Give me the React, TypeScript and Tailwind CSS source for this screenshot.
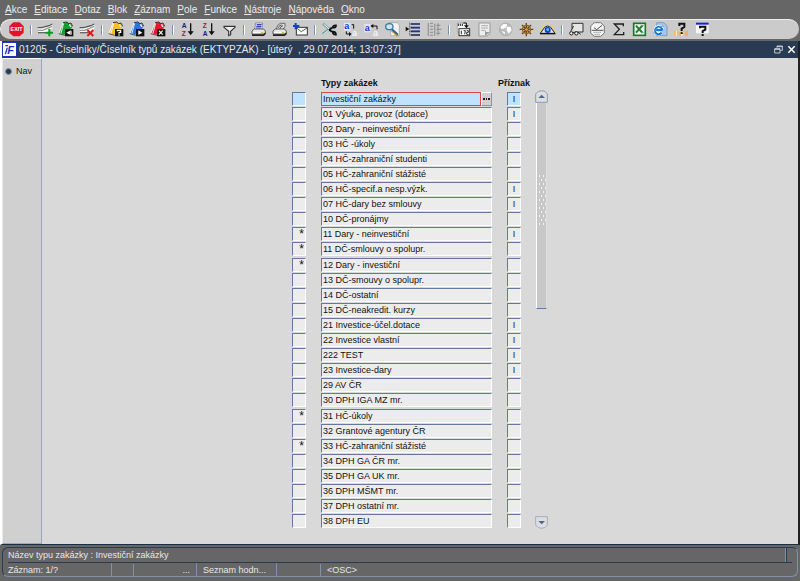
import type { ReactNode } from "react";

const MENU = ["Akce", "Editace", "Dotaz", "Blok", "Záznam", "Pole", "Funkce", "Nástroje", "Nápověda", "Okno"];

type Row = { name: string; flag?: string; mark?: string };

const ROWS: Row[] = [
  { name: "Investiční zakázky", flag: "I" },
  { name: "01 Výuka, provoz (dotace)", flag: "I" },
  { name: "02 Dary - neinvestiční" },
  { name: "03 HČ -úkoly" },
  { name: "04 HČ-zahraniční studenti" },
  { name: "05 HČ-zahraniční stážisté" },
  { name: "06 HČ-specif.a nesp.výzk.", flag: "I" },
  { name: "07 HČ-dary bez smlouvy", flag: "I" },
  { name: "10 DČ-pronájmy" },
  { name: "11 Dary - neinvestiční", flag: "I", mark: "*" },
  { name: "11 DČ-smlouvy o spolupr.", mark: "*" },
  { name: "12 Dary - investiční", mark: "*" },
  { name: "13 DČ-smouvy o spolupr." },
  { name: "14 DČ-ostatní" },
  { name: "15 DČ-neakredit. kurzy" },
  { name: "21 Investice-účel.dotace", flag: "I" },
  { name: "22 Investice vlastní", flag: "I" },
  { name: "222 TEST", flag: "I" },
  { name: "23 Investice-dary", flag: "I" },
  { name: "29 AV ČR" },
  { name: "30 DPH IGA MZ mr." },
  { name: "31 HČ-úkoly", mark: "*" },
  { name: "32 Grantové agentury ČR" },
  { name: "33 HČ-zahraniční stážisté", mark: "*" },
  { name: "34 DPH GA ČR mr." },
  { name: "35 DPH GA UK mr." },
  { name: "36 DPH MŠMT mr." },
  { name: "37 DPH ostatní mr." },
  { name: "38 DPH EU" },
];

function Record() {
  return (
    <>
      <path d="M3 20 36 14 46 9 46 22 34 35 3 35Z" fill="#fafafa" />
      <path d="M2 20h12l22-6 10-5" stroke="#555" strokeWidth="3.5" fill="none" />
      <path d="M3 28h14l14-6 14-6" stroke="#999" strokeWidth="4" fill="none" />
      <path d="M3 35h26" stroke="#666" strokeWidth="4" />
    </>
  );
}

// folder with a small black badge, shared by the query / block buttons
function Folder({ color, children }: { color: string; children: ReactNode }) {
  return (
    <>
      <path d="M3 37 15 6 28 3 43 14 36 34 20 41Z" fill={color} />
      <path d="M3 37 15 6M17 7 8 40" stroke="#fff" strokeWidth="2.5" />
      <path d="M15 5 26 3 32 8 39 6 44 16" stroke="#333" strokeWidth="3" fill="none" />
      <path d="M34 10 39 18" stroke="#eee" strokeWidth="4" />
      <path d="M2 38 20 43" stroke="#555" strokeWidth="3" />
      <rect x="21" y="24" width="25" height="22" fill="#111" />
      {children}
    </>
  );
}

function Printer() {
  return (
    <>
      <path d="M6 30 13 24h28l5 6v9H6Z" fill="#e6e6e6" stroke="#444" strokeWidth="2.5" />
      <path d="M6 40h34l6-6v7l-5 4H6Z" fill="#222" />
      <path d="M9 35h24" stroke="#fff" strokeWidth="3" />
      <path d="M33 35h6" stroke="#d9c21a" strokeWidth="4" />
    </>
  );
}

function GlyphA({ x, y, fill }: { x: number; y: number; fill: string }) {
  return (
    <text x={x} y={y} fontSize="27" fontWeight="bold" fill={fill} fontFamily="Liberation Sans, sans-serif">
      a
    </text>
  );
}

function SortIcon({ top, bottom }: { top: "A" | "Z"; bottom: "A" | "Z" }) {
  return (
    <g fontSize="20" fontWeight="bold" fontFamily="Liberation Sans, sans-serif">
      <text x="8" y="20" fill={top === "A" ? "#1c1c78" : "#a01830"}>
        {top}
      </text>
      <text x="8" y="44" fill={bottom === "A" ? "#1c1c78" : "#a01830"}>
        {bottom}
      </text>
      <path d="M35 7v28" stroke="#111" strokeWidth="4" />
      <path d="M26 31h18l-9 12Z" fill="#111" />
    </g>
  );
}

type Tool = { label: string; art: ReactNode };

const TOOLS: Tool[][] = [
  [
    {
      label: "Konec",
      art: (
        <>
          <path d="M16 4h19l12 12v19L35 46H16L4 35V16Z" fill="#df1525" />
          <text x="25.5" y="31" fontSize="16" fontWeight="bold" textAnchor="middle" fill="#fff" fontFamily="Liberation Sans, sans-serif">
            EXIT
          </text>
        </>
      ),
    },
  ],
  [
    {
      label: "Vložit záznam",
      art: (
        <>
          <Record />
          <path d="M37 24v22M26 35h22" stroke="#0b9a1c" strokeWidth="6" />
        </>
      ),
    },
    {
      label: "Uložit",
      art: (
        <Folder color="#12a02c">
          <path d="M38 28v14L25 35Z" fill="#fff" />
          <path d="M39 29h3v12h-3Z" fill="#999" />
        </Folder>
      ),
    },
    {
      label: "Smazat záznam",
      art: (
        <>
          <Record />
          <path d="M25 27 43 45M43 27 25 45" stroke="#e01818" strokeWidth="6" />
        </>
      ),
    },
  ],
  [
    {
      label: "Zadat dotaz",
      art: (
        <Folder color="#f5bd2c">
          <path d="M28 31v-3h10v6h-5v4M33 40v4" stroke="#fff" strokeWidth="3.5" fill="none" />
        </Folder>
      ),
    },
    {
      label: "Provést dotaz",
      art: (
        <Folder color="#2a75dc">
          <path d="M28 28v14l12-7Z" fill="#fff" />
        </Folder>
      ),
    },
    {
      label: "Zrušit dotaz",
      art: (
        <Folder color="#d42030">
          <path d="M27 29 38 41M38 29 27 41" stroke="#eee" strokeWidth="4" />
        </Folder>
      ),
    },
  ],
  [
    { label: "Řadit vzestupně", art: <SortIcon top="A" bottom="Z" /> },
    { label: "Řadit sestupně", art: <SortIcon top="Z" bottom="A" /> },
    {
      label: "Filtr",
      art: <path d="M9 16h33v3L29 31v10l-6 3V31L9 19Z" fill="#eee" stroke="#333" strokeWidth="3.5" />,
    },
  ],
  [
    {
      label: "Tisk",
      art: (
        <>
          <path d="M14 27 17 6h21l-3 21Z" fill="#f5f7ff" stroke="#666" strokeWidth="2" />
          <path d="M20 11h15M19 16h15M18 21h15" stroke="#3442b5" strokeWidth="3.5" />
          <Printer />
        </>
      ),
    },
    {
      label: "Náhled tisku",
      art: (
        <>
          <path d="M15 27 20 13 28 7h14v10l-9 12Z" fill="#ddd" stroke="#555" strokeWidth="2.5" />
          <path d="M22 20q4-9 10-8M27 23q2-8 9-9" stroke="#333" strokeWidth="2.5" fill="none" />
          <Printer />
        </>
      ),
    },
    {
      label: "Poslat poštou",
      art: (
        <>
          <rect x="13" y="19" width="33" height="23" fill="#fff" stroke="#333" strokeWidth="3" />
          <path d="M14 21 28 32 45 21" stroke="#333" strokeWidth="2.5" fill="none" />
          <path d="M11 6v19M3 15h19" stroke="#0c40d8" strokeWidth="6" />
        </>
      ),
    },
  ],
  [
    {
      label: "Vyjmout",
      art: (
        <>
          <path d="M6 8 32 32M5 39 31 20" stroke="#6f9f9f" strokeWidth="7" />
          <path d="M8 9 34 33M7 40 34 19" stroke="#e7f7f5" strokeWidth="3" />
          <path d="M24 27 34 20q12 2 11-7-8-1-11 8M24 27 34 32q11-1 11 9-9 1-11-9" fill="none" stroke="#111" strokeWidth="5" />
        </>
      ),
    },
    {
      label: "Kopírovat",
      art: (
        <>
          <rect x="6" y="6" width="19" height="23" fill="#e3e8ff" />
          <GlyphA x={7} y={25} fill="#2135d5" />
          <path d="M29 11h6v12M13 31v8h11" stroke="#111" strokeWidth="3" fill="none" />
          <path d="M21 33v13l8-7Z" fill="#111" />
          <GlyphA x={30} y={45} fill="#f5f5f5" />
        </>
      ),
    },
    {
      label: "Vložit",
      art: (
        <>
          <rect x="4" y="9" width="19" height="25" fill="#e3e8ff" />
          <GlyphA x={5} y={30} fill="#2135d5" />
          <path d="M26 15h16v10" stroke="#111" strokeWidth="3" fill="none" />
          <path d="M22 15l9-6v12Z" fill="#111" />
          <GlyphA x={30} y={45} fill="#f5f5f5" />
        </>
      ),
    },
    {
      label: "Hledat",
      art: (
        <>
          <path d="M14 5h26l6 7v32H20V5" fill="#f4f4f4" stroke="#999" strokeWidth="2" />
          <path d="M23 27 42 44" stroke="#c79a22" strokeWidth="8" />
          <path d="M22 23 41 40" stroke="#1f5cae" strokeWidth="5" />
          <ellipse cx="16" cy="17" rx="11" ry="9" fill="#c6e7f5" stroke="#3b7a98" strokeWidth="4" />
        </>
      ),
    },
    {
      label: "Seznam",
      art: (
        <>
          <path d="M17 9h28M17 20h28M17 31h28M17 42h28" stroke="#16205e" strokeWidth="5" />
          <path d="M21 20h24M21 31h24" stroke="#2648c8" strokeWidth="2" />
          <path d="M14 5v40" stroke="#111" strokeWidth="2" strokeDasharray="3 2" />
          <path d="M2 17v14l11-7Z" fill="#111" />
        </>
      ),
    },
    {
      label: "Strom",
      art: (
        <>
          <path d="M7 6v39M12 7h9M12 16h9M12 25h9M12 34h9M12 43h9M26 8v36M31 13h12M31 25h16M31 37h12" stroke="#999" strokeWidth="4" />
          <path d="M36 7v36" stroke="#8b8b8b" strokeWidth="3" />
        </>
      ),
    },
  ],
  [
    {
      label: "Kalendář",
      art: (
        <>
          <path d="M7 6h27v27H7Z" fill="#f5f5f5" stroke="#999" strokeWidth="2" />
          <path d="M10 8v7M16 8v7M22 8v7" stroke="#222" strokeWidth="3" />
          <path d="M25 6h9v9" stroke="#111" strokeWidth="3" fill="none" />
          <path d="M27 13h14l-7 9Z" fill="#111" />
          <rect x="12" y="23" width="32" height="21" fill="#fff" stroke="#333" strokeWidth="3" />
          <path d="M19 29v11M26 29h5l-2 11M35 29h5v5h-5v6h6" stroke="#333" strokeWidth="3" fill="none" />
        </>
      ),
    },
    {
      label: "Editor",
      art: (
        <>
          <path d="M9 6h33v31l-9 8H9Z" fill="#eee" stroke="#999" strokeWidth="3" />
          <path d="M16 14h20M16 21h20M16 28h11" stroke="#aaa" strokeWidth="3" />
          <path d="M42 33H31l-4-5v17Z" fill="#999" />
        </>
      ),
    },
    {
      label: "Web",
      art: (
        <>
          <circle cx="26" cy="25" r="19" fill="#bcbcbc" stroke="#a5a5a5" strokeWidth="2" />
          <path d="M10 18 19 9l11 1-2 9-9 4-6 1ZM30 17l11 1 3 10-9 10-6-10ZM15 29l9 5-2 7Z" fill="#fff" />
        </>
      ),
    },
    {
      label: "Navigátor",
      art: (
        <>
          <path d="M25 6v40M5 25h41M12 12 39 39M39 12 12 39" stroke="#6d410d" strokeWidth="4" />
          <circle cx="25.5" cy="25.5" r="12" fill="none" stroke="#95601d" strokeWidth="4" />
          <circle cx="25.5" cy="25.5" r="4" fill="#d8a450" />
        </>
      ),
    },
    {
      label: "Zobrazit",
      art: (
        <>
          <path d="M26 3v8M8 12l6 5M44 12l-6 5M2 27l7-2M49 27l-7-2" stroke="#f0dc30" strokeWidth="4" />
          <path d="M4 37 17 19q9-8 18 0l13 18Z" fill="#d7e4ed" stroke="#222" strokeWidth="3" />
          <circle cx="26" cy="27" r="9" fill="#1738ca" />
          <circle cx="26" cy="26" r="4" fill="#49d5ee" />
          <path d="M3 38h46" stroke="#111" strokeWidth="4" />
        </>
      ),
    },
  ],
  [
    {
      label: "Převod",
      art: (
        <>
          <path d="M12 7h33v26H19" fill="#e5e5e5" stroke="#333" strokeWidth="3" />
          <path d="M12 7v16M8 31l9-16M30 33l8 7" stroke="#333" strokeWidth="3" />
          <circle cx="10" cy="37" r="5" fill="#eee" stroke="#222" strokeWidth="3" />
          <circle cx="25" cy="37" r="5" fill="#eee" stroke="#222" strokeWidth="3" />
          <path d="M14 35h6" stroke="#222" strokeWidth="3" />
        </>
      ),
    },
    {
      label: "Čas",
      art: (
        <>
          <path d="M16 5h19l11 10v21L35 46H16L5 36V15Z" fill="#f4f4f4" stroke="#777" strokeWidth="3" />
          <path d="M15 20l8 6 16-13M8 28h35" stroke="#555" strokeWidth="3" fill="none" />
          <path d="M14 34h24M17 40h18" stroke="#777" strokeWidth="3" strokeDasharray="3 3" />
        </>
      ),
    },
    {
      label: "Součet",
      art: <path d="M40 16V9H13l15 16-15 16h28v-8" fill="none" stroke="#222" strokeWidth="4" />,
    },
    {
      label: "Excel",
      art: (
        <>
          <rect x="8" y="7" width="35" height="36" fill="#edf5ed" stroke="#18782b" strokeWidth="5" />
          <path d="M15 14 34 35M34 14 15 35" stroke="#227b34" strokeWidth="6" />
          <path d="M29 14h9M31 35h7" stroke="#6c9b71" strokeWidth="3" />
        </>
      ),
    },
    {
      label: "Internet",
      art: (
        <>
          <path d="M14 5h21l10 9v30H14Z" fill="#a7c6ea" stroke="#6387b3" strokeWidth="2" />
          <path d="M30 26a10 10 0 1 0-2 8" fill="none" stroke="#fff" strokeWidth="11" />
          <path d="M31 28a11 11 0 1 0-2 7M11 27h20" fill="none" stroke="#1978ca" strokeWidth="6" />
          <path d="M5 37q7-20 29-22" stroke="#58aaea" strokeWidth="3" fill="none" />
        </>
      ),
    },
    {
      label: "O aplikaci",
      art: (
        <>
          <path d="M4 29h10v16H4ZM17 33h12v12H17ZM35 29h10v16H35Z" fill="#efb553" />
          <path d="M8 29h4v16H8ZM24 36h5v9h-5Z" fill="#fff0b6" />
          <path d="M19 15V8h15v10l-8 5v7M26 34v5" stroke="#111" strokeWidth="6" fill="none" />
        </>
      ),
    },
    {
      label: "Nápověda",
      art: (
        <>
          <rect x="6" y="7" width="38" height="30" fill="#f5f5f5" />
          <path d="M6 8h38" stroke="#1420d8" strokeWidth="6" />
          <path d="M18 22v-5h16v9l-8 4v6M26 39v6" stroke="#111" strokeWidth="6" fill="none" />
        </>
      ),
    },
  ],
];

const FIELD = "block h-3.5 w-full border border-t-[#66799c] border-l-[#66799c] border-r-white border-b-white outline-none";

function MenuBar() {
  return (
    <nav className="flex h-[19px] items-center gap-[7px] px-[5px] text-[10px] text-[#ececec]">
      {MENU.map((item) => (
        <button key={item} type="button" className="leading-4">
          <span className="underline">{item[0]}</span>
          {item.slice(1)}
        </button>
      ))}
    </nav>
  );
}

function Toolbar() {
  return (
    <div className="mr-px flex h-5 items-center rounded-full border-t border-l border-[#eee] bg-[#cbcbcb] pl-[7px]">
      {TOOLS.map((group, i) => (
        <div key={i} className="flex items-center">
          {i > 0 && <span className="mx-[5px] h-2.5 w-0.5 border-r border-white bg-[#7d90b0]" />}
          <div className="flex gap-1">
            {group.map(({ label, art }) => (
              <button key={label} type="button" aria-label={label} className="size-[17px]">
                <svg viewBox="0 0 51 51" className="size-[17px]" fill="none">
                  {art}
                </svg>
              </button>
            ))}
          </div>
        </div>
      ))}
    </div>
  );
}

function TitleBar() {
  return (
    <header className="flex h-[17px] items-center bg-[#293a53] text-[#e4e8ee]">
      <svg viewBox="0 0 45 45" className="mr-0.5 size-[15px]">
        <rect x="1.5" y="1.5" width="42" height="42" fill="#fff" stroke="#2432b8" strokeWidth="3" />
        <path d="M10 11h8M16 17l-6 19" stroke="#2432c8" strokeWidth="4" />
        <text x="16" y="36" fontSize="33" fontWeight="bold" fontStyle="italic" fill="#2432c8" fontFamily="Liberation Sans, sans-serif">
          F
        </text>
      </svg>
      <h1 className="flex-1 text-[10px] leading-4 whitespace-pre">
        01205 - Číselníky/Číselník typů zakázek (EKTYPZAK) - [úterý  , 29.07.2014; 13:07:37]
      </h1>
      <button type="button" aria-label="Obnovit" className="mr-1">
        <svg viewBox="0 0 27 27" className="size-[9px]" fill="none" stroke="#dce1e8" strokeWidth="2.5">
          <path d="M9 8V3h16v13h-6M9 5h16" />
          <path d="M2 11h16v13H2ZM2 13h16" />
        </svg>
      </button>
      <button type="button" aria-label="Zavřít" className="mr-0.5">
        <svg viewBox="0 0 27 27" className="size-[9px]" stroke="#fff" strokeWidth="4.5">
          <path d="M4 4 23 23M23 4 4 23" />
        </svg>
      </button>
    </header>
  );
}

function RecordTable() {
  return (
    <table className="h-[452px] border-collapse">
      <thead>
        <tr className="h-[14px] align-top text-[9px] leading-3 font-bold">
          <th className="w-3.5 p-0" />
          <th className="w-[15px] p-0" />
          <th className="w-[171px] p-0 text-left">Typy zakázek</th>
          <th className="w-[15px] p-0" />
          <th className="w-3.5 p-0">
            <span className="-mx-3 block text-center">Příznak</span>
          </th>
        </tr>
      </thead>
      <tbody>
        {ROWS.map((row, i) => {
          const current = i === 0;
          const bg = current ? "bg-[#bfe3ff]" : "bg-[#ececec]";
          return (
            <tr key={i} className="h-[15px]">
              <td className="p-0">
                <input
                  aria-label={`Poznámka ${i + 1}`}
                  defaultValue={row.mark}
                  className={`${FIELD} ${bg} pr-px text-right text-xs leading-3`}
                />
              </td>
              <td className="p-0" />
              <td className="p-0">
                <div className="flex">
                  <input
                    aria-label={`Typ zakázky ${i + 1}`}
                    defaultValue={row.name}
                    className={
                      current
                        ? "block h-3.5 w-full min-w-0 flex-1 border border-[#e04848] bg-[#bfe3ff] pl-px text-[9px] leading-3 outline-none"
                        : `${FIELD} ${bg} pl-px text-[9px] leading-3`
                    }
                  />
                  {current && (
                    <button
                      type="button"
                      aria-label="Seznam hodnot"
                      className="flex h-3.5 w-[11px] items-center justify-center border border-t-white border-l-white border-r-[#8a95a8] border-b-[#8a95a8] bg-[#d0d0d0]"
                    >
                      <svg viewBox="0 0 7 2" className="h-0.5 w-[7px]" fill="#301018">
                        <path d="M0 0h2v2H0ZM3 0h1v2H3ZM5 0h2v2H5Z" />
                      </svg>
                    </button>
                  )}
                </div>
              </td>
              <td className="p-0" />
              <td className="p-0">
                <input
                  aria-label={`Příznak ${i + 1}`}
                  defaultValue={row.flag}
                  className={`${FIELD} ${bg} text-center text-[9px] leading-3`}
                />
              </td>
            </tr>
          );
        })}
      </tbody>
    </table>
  );
}

function Scroller() {
  return (
    <div className="flex w-[13px] flex-col items-center pt-[13px]">
      <button type="button" aria-label="Nahoru" className="w-[13px]">
        <svg viewBox="0 0 39 39" className="size-[13px]">
          <path d="M2 37V12Q8 2 20 2t17 10v25Z" fill="#dedede" stroke="#8c9ab3" strokeWidth="3" />
          <path d="M10 24h20L20 14Z" fill="#4d6492" />
        </svg>
      </button>
      <div className="flex h-[206px] w-[11px] flex-col items-center justify-center border border-t-0 border-l-white border-r-[#dedede] border-b-[#66799c] bg-[#c8c8c8] pb-2">
        <svg viewBox="0 0 8 54" className="h-[54px] w-2" fill="#f5f5f5">
          {Array.from({ length: 13 }, (_, i) => (
            <path key={i} d={`M${i % 2 ? 3 : 1} ${i * 4}h1v2h-1ZM${i % 2 ? 7 : 5} ${i * 4}h1v2h-1Z`} />
          ))}
        </svg>
      </div>
      <button type="button" aria-label="Dolů" className="mt-auto w-[13px]">
        <svg viewBox="0 0 39 39" className="size-[13px]">
          <path d="M2 2v25q6 10 18 10t17-10V2Z" fill="#dedede" stroke="#a5aebd" strokeWidth="3" />
          <path d="M10 15h20L20 25Z" fill="#4d6492" />
        </svg>
      </button>
    </div>
  );
}

function StatusBar() {
  return (
    <footer className="mx-0.5 mt-0.5 mb-[5px] rounded-md border border-t-[#293a53] border-l-[#293a53] border-r-[#8291ab] border-b-[#8291ab] px-[5px] text-[9px] leading-[14px] text-[#e8e8e8]">
      <div className="flex h-[15px] items-center justify-between border-b border-[#293a53]">
        <span>Název typu zakázky : Investiční zakázky</span>
        <span className="mr-[5px] h-full w-0.5 border-l border-[#8291ab] bg-[#293a53]" />
      </div>
      <div className="flex h-[13px] items-center">
        <span className="w-[104px] border-r border-[#8291ab]">Záznam: 1/?</span>
        <span className="h-3 w-[22px] border-r border-[#8291ab]" />
        <span className="w-[63px] border-r border-[#8291ab] pr-1.5 text-right">...</span>
        <span className="w-20 border-r border-[#8291ab] pl-1.5">Seznam hodn...</span>
        <span className="h-3 w-11 border-r border-[#8291ab]" />
        <span className="pl-1.5">&lt;OSC&gt;</span>
      </div>
    </footer>
  );
}

export default function App() {
  return (
    <div className="flex min-h-screen flex-col bg-[#666] font-['Liberation_Sans',Arial,sans-serif] text-[#111]">
      <MenuBar />
      <Toolbar />
      <div className="mt-0.5 flex flex-1 flex-col border-r-2 border-b border-l-2 border-r-[#222] border-b-[#1d2f3a] border-l-white">
        <TitleBar />
        <main className="flex flex-1 bg-[#d9d9d9]">
          <aside className="w-10 border border-t-white border-l-[#e8e8e8] border-r-[#9aa7bd] border-b-[#9aa7bd] bg-[#d0d0d0] pt-1.5">
            <label className="flex items-center gap-1 pl-0.5 text-[9px]">
              <input
                type="radio"
                defaultChecked
                className="size-[7px] appearance-none rounded-full border border-[#8593ab] bg-[#293a53]"
              />
              Nav
            </label>
          </aside>
          <div className="flex flex-1 justify-center pt-[19px] pb-[15px]">
            <div className="flex gap-[14px]">
              <RecordTable />
              <Scroller />
            </div>
          </div>
        </main>
      </div>
      <StatusBar />
    </div>
  );
}
